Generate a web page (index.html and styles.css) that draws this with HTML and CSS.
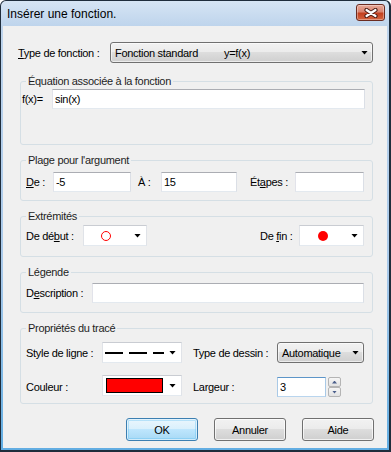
FILE: index.html
```html
<!DOCTYPE html>
<html lang="fr">
<head>
  <meta charset="UTF-8" />
  <title>Insérer une fonction.</title>
  <link rel="stylesheet" href="styles.css">
</head>
<body>
  <div class="window">
    <div class="titlebar">
      <span class="title">Insérer une fonction.</span>
      <span class="close">
        <svg width="14" height="10" viewBox="0 0 14 10">
          <path d="M2.5 2 L11.5 8 M11.5 2 L2.5 8" stroke="#4b1c14" stroke-width="4.2" stroke-linecap="round"/>
          <path d="M2.5 2 L11.5 8 M11.5 2 L2.5 8" stroke="#fff" stroke-width="2.2" stroke-linecap="round"/>
        </svg>
      </span>
    </div>

    <div class="client">
      <div class="row type-row">
        <label class="lbl w-type"><u>T</u>ype de fonction :</label>
        <div class="combo combo-btn grow">
          <span class="combo-text"><span class="fn-name">Fonction standard</span>y=f(x)</span>
          <span class="arrow"></span>
        </div>
      </div>

      <fieldset class="group g-eq">
        <legend>Équation associée à la fonction</legend>
        <div class="row eq-row">
          <label class="lbl w-fx">f(x)=</label>
          <input class="edit grow" type="text" value="sin(x)">
        </div>
      </fieldset>

      <fieldset class="group g-range">
        <legend>Plage pour l'argument</legend>
        <div class="row">
          <label class="lbl w-de"><u>D</u>e :</label>
          <input class="edit w-from" type="text" value="-5">
          <label class="lbl w-a">À :</label>
          <input class="edit w-to" type="text" value="15">
          <label class="lbl w-steps">Ét<u>a</u>pes :</label>
          <input class="edit grow" type="text" value="">
        </div>
      </fieldset>

      <fieldset class="group g-ends">
        <legend>Extrémités</legend>
        <div class="row ends-row">
          <div class="row">
            <label class="lbl w-start">De dé<u>b</u>ut :</label>
            <div class="combo combo-white w-startbox">
              <span class="dot dot-open"></span>
              <span class="arrow"></span>
            </div>
          </div>
          <div class="row">
            <label class="lbl w-end">De <u>f</u>in :</label>
            <div class="combo combo-white w-endbox">
              <span class="dot dot-full"></span>
              <span class="arrow"></span>
            </div>
          </div>
        </div>
      </fieldset>

      <fieldset class="group g-legend">
        <legend>Légende</legend>
        <div class="row">
          <label class="lbl w-desc">D<u>e</u>scription :</label>
          <input class="edit grow" type="text" value="">
        </div>
      </fieldset>

      <fieldset class="group g-props">
        <legend>Propriétés du tracé</legend>
        <div class="row props-row">
          <label class="lbl w-plabel">Style de ligne :</label>
          <div class="combo combo-white w-pbox">
            <svg class="dashes" width="59" height="2" viewBox="0 0 59 2">
              <line x1="0" y1="1" x2="59" y2="1" stroke="#000" stroke-width="2" stroke-dasharray="18 6"/>
            </svg>
            <span class="arrow"></span>
          </div>
          <label class="lbl w-plabel2">Type de dessin :</label>
          <div class="combo combo-btn grow">
            <span class="combo-text">Automatique</span>
            <span class="arrow"></span>
          </div>
        </div>
        <div class="row props-row2">
          <label class="lbl w-plabel">Couleur :</label>
          <div class="combo combo-white w-pbox top">
            <span class="swatch"></span>
            <span class="arrow"></span>
          </div>
          <label class="lbl w-plabel2">Largeur :</label>
          <input class="edit edit-focus w-width" type="text" value="3">
          <div class="spin">
            <span class="spin-btn"><span class="tri-up"></span></span>
            <span class="spin-btn"><span class="tri-down"></span></span>
          </div>
        </div>
      </fieldset>

      <div class="buttons">
        <button class="btn btn-default">OK</button>
        <button class="btn">Annuler</button>
        <button class="btn">Aide</button>
      </div>
    </div>
  </div>
</body>
</html>
```

FILE: styles.css
```css
* {
  box-sizing: border-box;
}
body {
  margin: 0;
  background: #fff;
  font-family: "Liberation Sans", Arial, sans-serif;
  font-size: 11px;
  letter-spacing: -0.3px;
  color: #000;
}
u {
  text-decoration: underline;
  text-underline-offset: 1px;
}

/* window frame */
.window {
  width: 391px;
  height: 452px;
  display: flex;
  flex-direction: column;
  border-style: solid;
  border-color: #1f2d3c;
  border-width: 1px 2px 2px 1px;
  border-radius: 6px 6px 0 0;
  padding: 0 2px 2px 2px;
  background: linear-gradient(#d6e5f4, #bed4ec 25px, #a8c9ea 60%, #62ade2);
}
.titlebar {
  height: 25px;
  display: flex;
  align-items: flex-start;
  justify-content: space-between;
  padding-left: 4px;
}
.title {
  font-size: 12px;
  letter-spacing: 0;
  line-height: 14px;
  margin-top: 6px;
}
.close {
  width: 29px;
  height: 17px;
  margin: 3px 2px 0 0;
  border: 1px solid #6b2b20;
  border-radius: 3px;
  background: linear-gradient(#e7a898, #d98470 45%, #c2401f 55%, #d5653f);
  box-shadow: inset 0 0 0 1px rgba(255, 255, 255, 0.35);
  display: flex;
  align-items: center;
  justify-content: center;
}

.client {
  flex: 1;
  background: #f0f0f0;
  padding: 16px 14px 0 15px;
}

/* generic rows */
.row {
  display: flex;
  align-items: center;
}
.grow {
  flex: 1;
  width: 0;
  min-width: 0;
}
.lbl {
  flex: none;
  white-space: nowrap;
}

/* group boxes */
.group {
  margin: 9px 0 0 2px;
  min-width: 0;
  border: 1px solid #d5dfe5;
  border-radius: 3px;
  padding: 0 8px 0 5px;
}
.group legend {
  padding: 0 2px;
  line-height: 13px;
  color: #1e1e1e;
}
.g-eq {
  margin-top: 12px;
  padding: 1px 7px 35px 5px;
}
.eq-row {
  margin-left: -4px;
}
.g-range {
  padding-top: 5px;
  padding-bottom: 8px;
}
.g-ends {
  padding-top: 2px;
  padding-bottom: 10px;
}
.ends-row {
  justify-content: space-between;
}
.g-legend {
  padding-top: 4px;
  padding-bottom: 9px;
}
.g-props {
  padding-top: 7px;
  padding-bottom: 4px;
}
.props-row {
  height: 21px;
}
.props-row2 {
  height: 24px;
  margin-top: 12px;
}

/* label widths */
.w-type { width: 92px; }
.w-fx { width: 30px; }
.w-de { width: 27px; }
.w-from { width: 78px; }
.w-a { width: 23px; margin-left: 7px; }
.w-to { width: 76px; }
.w-steps { width: 45px; margin-left: 13px; }
.w-start { width: 57px; }
.w-startbox { width: 64px; }
.w-end { width: 39px; }
.w-endbox { width: 65px; }
.w-desc { width: 66px; }
.w-plabel { width: 76px; }
.w-pbox { width: 80px; }
.w-plabel2 { width: 84px; margin-left: 11px; }
.w-width { width: 49px; }

/* edit boxes */
.edit {
  height: 20px;
  margin: 0;
  padding: 0 2px;
  border: 1px solid;
  border-color: #abadb3 #dbdfe6 #e3e9ef #e2e3ea;
  background: #fff;
  font: inherit;
  letter-spacing: inherit;
  color: #000;
  outline: none;
}
.edit-focus {
  border-color: #5d95c8 #a9c9e6 #b9d5ee #a9c9e6;
}

/* combos */
.combo {
  height: 21px;
  display: flex;
  align-items: center;
}
.combo-btn {
  border: 1px solid #707070;
  border-radius: 3px;
  background: linear-gradient(#f2f2f2, #ebebeb 50%, #dddddd 50%, #cfcfcf);
  box-shadow: inset 0 0 0 1px rgba(255, 255, 255, 0.6);
  padding: 0 4px 0 4px;
}
.combo-white {
  border: 1px solid;
  border-color: #c9ccd2 #e0e3e8 #e3e9ef #e0e3e8;
  background: #fff;
  padding: 0 5px 0 0;
}
.combo.top {
  align-self: flex-start;
}
.combo-text {
  flex: 1;
  white-space: nowrap;
}
.fn-name {
  display: inline-block;
  width: 109px;
}
.arrow {
  flex: none;
  width: 7px;
  height: 4px;
  margin-left: auto;
  background: #000;
  clip-path: polygon(0 0, 100% 0, 50% 100%);
}
.dot {
  flex: none;
  width: 10px;
  height: 10px;
  border-radius: 50%;
}
.dot-open {
  margin-left: 17px;
  border: 1px solid #f00;
  background: #fff;
}
.dot-full {
  margin-left: 18px;
  background: #f00;
}
.dashes {
  flex: none;
  margin-left: 2px;
}
.swatch {
  flex: none;
  width: 57px;
  height: 15px;
  margin-left: 3px;
  border: 1px solid #000;
  background: #f00;
}

/* spin buttons */
.spin {
  display: flex;
  flex-direction: column;
  margin-left: 2px;
}
.spin-btn {
  width: 13px;
  height: 10px;
  border: 1px solid #b4b4b4;
  border-radius: 2px;
  background: linear-gradient(#f6f6f6, #e2e2e2);
  display: flex;
  align-items: center;
  justify-content: center;
}
.tri-up,
.tri-down {
  width: 5px;
  height: 3px;
  background: #4b5f8b;
}
.tri-up {
  clip-path: polygon(50% 0, 100% 100%, 0 100%);
}
.tri-down {
  clip-path: polygon(0 0, 100% 0, 50% 100%);
}

/* dialog buttons */
.buttons {
  display: flex;
  justify-content: flex-end;
  gap: 16px;
  margin-top: 14px;
  margin-right: -1px;
}
.btn {
  width: 72px;
  height: 23px;
  padding: 0;
  border: 1px solid #707070;
  border-radius: 3px;
  background: linear-gradient(#f2f2f2, #ebebeb 50%, #dddddd 50%, #cfcfcf);
  box-shadow: inset 0 0 0 1px rgba(255, 255, 255, 0.7);
  font: inherit;
  letter-spacing: inherit;
  color: #000;
}
.btn-default {
  border-color: #3c7fb1;
  background: linear-gradient(#eaf6fd, #d9f0fc 50%, #bee6fd 50%, #a7d9f5);
  box-shadow: inset 0 0 0 1px rgba(255, 255, 255, 0.6), inset 0 0 0 2px rgba(90, 190, 240, 0.35);
}
```
